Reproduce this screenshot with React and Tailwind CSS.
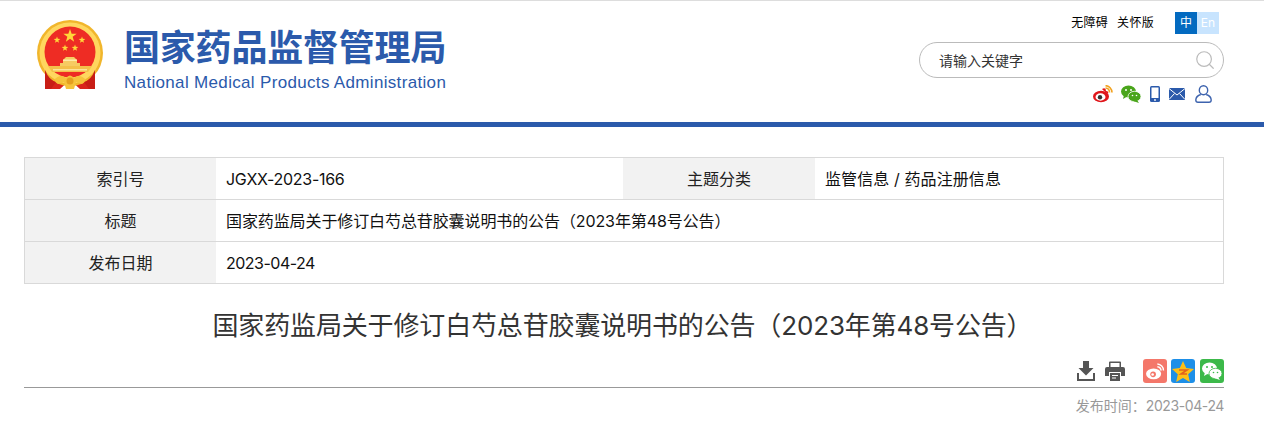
import { Search } from "lucide-react";

const cjk = { fontFamily: '"Inter", "Noto Sans CJK SC", sans-serif' };

function Star({ x, y, r, fill = "#ffd83a" }) {
  const pts = [];
  for (let i = 0; i < 10; i++) {
    const rad = i % 2 === 0 ? r : r * 0.4;
    const a = (Math.PI / 5) * i - Math.PI / 2;
    pts.push(`${x + rad * Math.cos(a)},${y + rad * Math.sin(a)}`);
  }
  return <polygon points={pts.join(" ")} fill={fill} />;
}

function Emblem() {
  return (
    <svg width="68" height="72" viewBox="0 0 68 72">
      <path d="M9 46 L9 69 L24 69 L34 60 L44 69 L59 69 L59 46 Z" fill="#d9261c" />
      <circle cx="34" cy="33" r="33" fill="#f1b62c" />
      <circle cx="34" cy="33" r="30.5" fill="#ffd75f" />
      <circle cx="34" cy="32" r="25.5" fill="#ee2c24" />
      <path d="M24 51 V43 H27 V40 L30 37 H38 L41 40 V43 H44 V51 Z" fill="#f6cb62" />
      <rect x="27" y="39.5" width="14" height="1.5" fill="#ffe9a8" />
      <path d="M12 46 H56 L52 52 H16 Z" fill="#f4c04a" />
      <rect x="17" y="49" width="34" height="1.5" fill="#fde39a" />
      <Star x={34} y={16} r={7} />
      <Star x={21} y={20} r={3.5} />
      <Star x={46} y={20} r={3.5} />
      <Star x={29} y={28} r={3.5} />
      <Star x={39} y={28} r={3.5} />
      <path d="M9 50 Q13 60 20 62 L15 69 L9 69 Z" fill="#c81e16" />
      <path d="M59 50 Q55 60 48 62 L53 69 L59 69 Z" fill="#c81e16" />
      <path d="M18 60 Q24 53 30 58 Q34 53 38 58 Q44 53 50 60 L46 64 L40 62 L38 69 H30 L28 62 L22 64 Z" fill="#f6c33c" />
      <circle cx="34" cy="61" r="3.5" fill="#e59f1f" />
    </svg>
  );
}

function WeiboIcon() {
  return (
    <svg width="20" height="18" viewBox="0 0 20 18">
      <ellipse cx="8" cy="11.5" rx="8" ry="5.8" fill="#e0161b" />
      <ellipse cx="7.5" cy="12" rx="5" ry="3.7" fill="#fff" />
      <circle cx="7" cy="12.2" r="2.2" fill="#333" />
      <path d="M9 4 Q13 2 13 6 Q16 6 15 9 L11 6 Z" fill="#e0161b" />
      <path d="M12.5 3 A4.5 4.5 0 0 1 16.5 7.5" fill="none" stroke="#f2a21f" strokeWidth="1.6" />
      <path d="M12.5 0.6 A7 7 0 0 1 19 7.5" fill="none" stroke="#f2a21f" strokeWidth="1.6" />
    </svg>
  );
}

function WechatIcon() {
  return (
    <svg width="20" height="18" viewBox="0 0 20 18">
      <ellipse cx="7.5" cy="6.5" rx="7.5" ry="6" fill="#4aa51b" />
      <path d="M3 10 L2 14 L7 11 Z" fill="#4aa51b" />
      <ellipse cx="13.5" cy="11.5" rx="6.5" ry="5.2" fill="#4aa51b" stroke="#fff" strokeWidth="0.8" />
      <path d="M16 15 L18 18 L12 16 Z" fill="#4aa51b" />
      <circle cx="5" cy="5" r="1" fill="#fff" />
      <circle cx="10" cy="5" r="1" fill="#fff" />
      <circle cx="11.5" cy="10.5" r="0.8" fill="#fff" />
      <circle cx="15.5" cy="10.5" r="0.8" fill="#fff" />
    </svg>
  );
}

function PhoneIcon() {
  return (
    <svg width="10" height="16" viewBox="0 0 10 16">
      <rect x="0" y="0" width="10" height="16" rx="1.5" fill="#2b5aab" />
      <rect x="1.5" y="1.5" width="7" height="10.5" fill="#fff" />
      <circle cx="5" cy="14" r="0.9" fill="#fff" />
    </svg>
  );
}

function MailIcon() {
  return (
    <svg width="16" height="12" viewBox="0 0 16 12">
      <rect width="16" height="12" fill="#2b5aab" />
      <path d="M0 0.5 L8 7 L16 0.5 M0 11.5 L5.5 5.5 M16 11.5 L10.5 5.5" fill="none" stroke="#fff" strokeWidth="1" />
    </svg>
  );
}

function UserIcon() {
  return (
    <svg width="17" height="18" viewBox="0 0 17 18" fill="none" stroke="#3d63ae" strokeWidth="1.4">
      <ellipse cx="8.5" cy="5.2" rx="4.2" ry="4.5" />
      <path d="M5.8 9.5 Q1 11 0.8 15 Q0.8 17.2 3 17.2 H14 Q16.2 17.2 16.2 15 Q16 11 11.2 9.5" />
    </svg>
  );
}

function DownloadIcon() {
  return (
    <svg width="18" height="20" viewBox="0 0 18 20" fill="#555">
      <path d="M6 0 H12 V7 H16.5 L9 14.5 L1.5 7 H6 Z" />
      <path d="M0 12 H2 V18 H16 V12 H18 V20 H0 Z" />
    </svg>
  );
}

function PrintIcon() {
  return (
    <svg width="20" height="20" viewBox="0 0 20 20">
      <path d="M4 7 V1.5 Q4 0.5 5 0.5 H15 Q16 0.5 16 1.5 V7 H14.5 V2 H5.5 V7 Z" fill="#555" />
      <path d="M2 6 H18 Q20 6 20 8 V15 H16 V11 H4 V15 H0 V8 Q0 6 2 6 Z" fill="#555" />
      <path d="M5 12 H15 V20 H5 Z" fill="#555" />
      <rect x="7" y="14" width="6" height="1" fill="#fff" />
      <rect x="7" y="16.5" width="4" height="1" fill="#fff" />
    </svg>
  );
}

function ShareWeibo() {
  return (
    <div className="w-6 h-6 rounded-[3px] bg-[#f4776a] flex items-center justify-center">
      <svg width="20" height="17" viewBox="0 0 20 18">
        <ellipse cx="8.5" cy="11.5" rx="8" ry="5.8" fill="#fff" />
        <circle cx="8" cy="12" r="3" fill="#f4776a" />
        <circle cx="7.5" cy="12.2" r="1.4" fill="#fff" />
        <path d="M12.5 4 A4.5 4.5 0 0 1 16.5 8" fill="none" stroke="#fff" strokeWidth="1.5" />
        <path d="M12.5 1 A7 7 0 0 1 19 8" fill="none" stroke="#fff" strokeWidth="1.5" />
      </svg>
    </div>
  );
}

function ShareQzone() {
  return (
    <div className="w-6 h-6 rounded-[3px] bg-[#1d8fe8] flex items-center justify-center">
      <svg width="22" height="21" viewBox="0 0 22 21">
        <polygon points="11,0 14.2,7 22,8 16.2,13.2 17.8,21 11,17 4.2,21 5.8,13.2 0,8 7.8,7" fill="#fcbf17" />
        <path d="M7 9 H15 L9 13 H15" fill="none" stroke="#e2631c" strokeWidth="1.6" />
      </svg>
    </div>
  );
}

function ShareWechat() {
  return (
    <div className="w-6 h-6 rounded-[3px] bg-[#3cb94a] flex items-center justify-center">
      <svg width="20" height="18" viewBox="0 0 20 18">
        <ellipse cx="7.5" cy="6.5" rx="7.5" ry="6" fill="#fff" />
        <path d="M3 10 L2 14 L7 11 Z" fill="#fff" />
        <ellipse cx="13.5" cy="11.5" rx="6.5" ry="5.2" fill="#fff" stroke="#3cb94a" strokeWidth="0.8" />
        <path d="M16 15 L18 18 L12 16 Z" fill="#fff" />
        <circle cx="5" cy="5" r="1" fill="#3cb94a" />
        <circle cx="10" cy="5" r="1" fill="#3cb94a" />
        <circle cx="11.5" cy="10.5" r="0.8" fill="#3cb94a" />
        <circle cx="15.5" cy="10.5" r="0.8" fill="#3cb94a" />
      </svg>
    </div>
  );
}

function Header() {
  return (
    <header className="h-[127px] border-t border-[#ddd] border-b-[5px] border-b-[#2b5aab]">
      <div className="w-[1200px] ml-6 flex justify-between">
        <div className="flex pl-[12px] pt-[19px]">
          <Emblem />
          <div className="ml-[20px] pt-[6px]">
            <div className="text-[36px] leading-[44px] font-bold tracking-[-0.2px] text-[#2b5aab]">国家药品监督管理局</div>
            <div
              className="text-[17px] leading-[20px] mt-[3px] tracking-[0.33px] text-[#2b5aab]"
              style={{ fontFamily: '"Liberation Sans", sans-serif' }}
            >
              National Medical Products Administration
            </div>
          </div>
        </div>
        <div className="w-[305px] pt-[11px]">
          <div className="flex justify-end items-center pr-[5px]">
            <span className="text-[12px] tracking-[0.3px] text-black">无障碍</span>
            <span className="text-[12px] tracking-[0.3px] text-black ml-[9px] mr-[21px]">关怀版</span>
            <span className="w-[22px] h-[22px] bg-[#036ac0] text-white text-[12px] flex items-center justify-center">中</span>
            <span className="w-[22px] h-[22px] bg-[#c8e4fe] text-white text-[12px] flex items-center justify-center">En</span>
          </div>
          <div className="mt-[8px] h-[36px] border border-[#bbb] rounded-[18px] flex items-center justify-between pl-[19px] pr-[8px]">
            <span className="text-[14px] text-[#333]">请输入关键字</span>
            <Search size={20} strokeWidth={1.3} className="text-[#bbb] scale-110" />
          </div>
          <div className="mt-[7px] flex items-center justify-end pr-[12px]">
            <WeiboIcon />
            <span className="ml-[8px]"><WechatIcon /></span>
            <span className="ml-[9px]"><PhoneIcon /></span>
            <span className="ml-[9px]"><MailIcon /></span>
            <span className="ml-[10px]"><UserIcon /></span>
          </div>
        </div>
      </div>
    </header>
  );
}

function Label({ children }) {
  return (
    <div className="w-[191px] shrink-0 bg-[#f2f2f2] flex items-center justify-center text-[#222]">{children}</div>
  );
}

function Value({ children, className = "" }) {
  return <div className={`px-[10px] flex items-center text-[#111] ${className}`}>{children}</div>;
}

function InfoTable() {
  return (
    <div className="mt-[30px] border border-[#d9d9d9] text-[16px]">
      <div className="flex h-[42px] border-b border-[#d9d9d9]">
        <Label>索引号</Label>
        <Value className="w-[407px] tracking-[-0.3px]">JGXX-2023-166</Value>
        <div className="w-[192px] shrink-0 bg-[#f2f2f2] flex items-center justify-center text-[#222]">主题分类</div>
        <Value className="flex-1 tracking-[0.1px]">监管信息 / 药品注册信息</Value>
      </div>
      <div className="flex h-[42px] border-b border-[#d9d9d9]">
        <Label>标题</Label>
        <Value className="flex-1 tracking-[-0.1px]">国家药监局关于修订白芍总苷胶囊说明书的公告（2023年第48号公告）</Value>
      </div>
      <div className="flex h-[41px]">
        <Label>发布日期</Label>
        <Value className="flex-1 tracking-[-0.5px]">2023-04-24</Value>
      </div>
    </div>
  );
}

export default function App() {
  return (
    <div className="h-[431px] overflow-hidden bg-white" style={cjk}>
      <Header />
      <main className="w-[1200px] ml-6">
        <InfoTable />
        <h1 className="mt-[24px] pr-[3px] text-center text-[26px] leading-[36px] tracking-[-0.15px] text-[#333]">
          国家药监局关于修订白芍总苷胶囊说明书的公告（2023年第48号公告）
        </h1>
        <div className="mt-[15px] flex items-center justify-end h-[24px]">
          <DownloadIcon />
          <span className="ml-[10px]"><PrintIcon /></span>
          <span className="ml-[18px]"><ShareWeibo /></span>
          <span className="ml-[4px]"><ShareQzone /></span>
          <span className="ml-[5px]"><ShareWechat /></span>
        </div>
        <div className="mt-[4px] border-t border-[#999]" />
        <div className="mt-[8px] text-right text-[14px] leading-[20px] text-[#999]">
          发布时间：<span className="tracking-[-0.4px]">2023-04-24</span>
        </div>
      </main>
    </div>
  );
}
